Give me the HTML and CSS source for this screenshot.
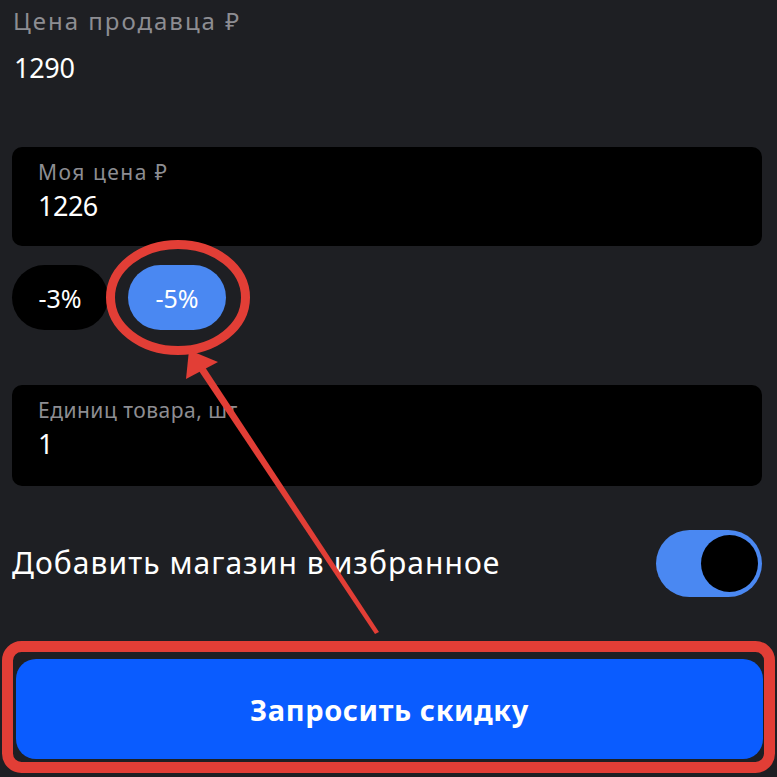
FILE: index.html
```html
<!DOCTYPE html>
<html lang="ru">
<head>
<meta charset="utf-8">
<link rel="stylesheet" href="styles.css">
</head>
<body>
<div class="screen">
  <div class="seller">
    <div class="seller-label">Цена продавца ₽</div>
    <div class="seller-value">1290</div>
  </div>

  <div class="field field-price">
    <div class="field-label field-label-wide">Моя цена ₽</div>
    <div class="field-value">1226</div>
  </div>

  <div class="chips">
    <div class="chip">-3%</div>
    <div class="chip chip-active">-5%</div>
  </div>

  <div class="field field-units">
    <div class="field-label">Единиц товара, шт</div>
    <div class="field-value">1</div>
  </div>

  <div class="fav-row">
    <div class="fav-text">Добавить магазин в избранное</div>
    <div class="toggle"><div class="knob"></div></div>
  </div>

  <div class="submit-wrap">
    <button class="submit">Запросить скидку</button>
  </div>

  <svg class="annot" width="777" height="777" viewBox="0 0 777 777">
    <ellipse cx="178" cy="297.5" rx="67.5" ry="53" fill="none" stroke="#e23e36" stroke-width="9"/>
    <rect x="7.5" y="646.5" width="762" height="121" rx="14" fill="none" stroke="#e23e36" stroke-width="11"/>
    <polygon points="379,632 375,634 193,362 199,358" fill="#e23e36"/>
    <polygon points="189,350 218,362 186,379" fill="#e23e36"/>
  </svg>
</div>
</body>
</html>
```

FILE: styles.css
```css
* { box-sizing: border-box; }
html, body {
  margin: 0;
  padding: 0;
  background: #1e1f23;
}
body {
  width: 777px;
  height: 777px;
  overflow: hidden;
  font-family: "Noto Sans", "Open Sans", sans-serif;
  color: #ffffff;
}
.screen {
  position: relative;
  width: 777px;
  height: 777px;
  padding: 5px 15px 0 12px;
}
.seller-label {
  font-size: 24px;
  line-height: 32px;
  color: #8d8d92;
  padding-left: 1px;
  letter-spacing: 2px;
}
.seller-value {
  font-size: 27px;
  line-height: 32px;
  margin-top: 15px;
  padding-left: 2px;
  letter-spacing: -0.3px;
}
.field {
  background: #000;
  border-radius: 10px;
  height: 99px;
  padding: 11px 26px 0;
}
.field-price { margin-top: 63px; }
.field-label {
  font-size: 21px;
  line-height: 28px;
  color: #8d8d92;
  letter-spacing: 0.5px;
}
.field-label-wide { letter-spacing: 1.5px; }
.field-value {
  font-size: 27px;
  line-height: 34px;
  margin-top: 3px;
  letter-spacing: -0.5px;
}
.chips {
  display: flex;
  gap: 20px;
  margin-top: 19px;
}
.chip {
  height: 65px;
  width: 96px;
  border-radius: 33px;
  background: #000;
  display: flex;
  align-items: center;
  justify-content: center;
  font-size: 25px;
}
.chip-active {
  background: #4a88f2;
  width: 98px;
}
.field-units { margin-top: 55px; height: 101px; }
.fav-row {
  display: flex;
  align-items: center;
  justify-content: space-between;
  margin-top: 44px;
  height: 67px;
}
.fav-text {
  font-size: 30px;
  letter-spacing: 1.05px;
  margin-top: -3px;
}
.toggle {
  width: 106px;
  height: 67px;
  border-radius: 34px;
  background: #4a88f2;
  display: flex;
  align-items: center;
  justify-content: flex-end;
  padding-right: 4px;
}
.knob {
  width: 57px;
  height: 57px;
  border-radius: 50%;
  background: #000;
}
.submit-wrap {
  margin-top: 62px;
  padding-left: 4px;
}
.submit {
  display: block;
  width: 747px;
  height: 100px;
  border: none;
  border-radius: 20px;
  background: #0a5cff;
  color: #fff;
  font-family: "Noto Sans", "Open Sans", sans-serif;
  font-weight: 700;
  font-size: 29px;
  letter-spacing: 0.6px;
}
.annot {
  position: absolute;
  left: 0;
  top: 0;
  pointer-events: none;
}
```
